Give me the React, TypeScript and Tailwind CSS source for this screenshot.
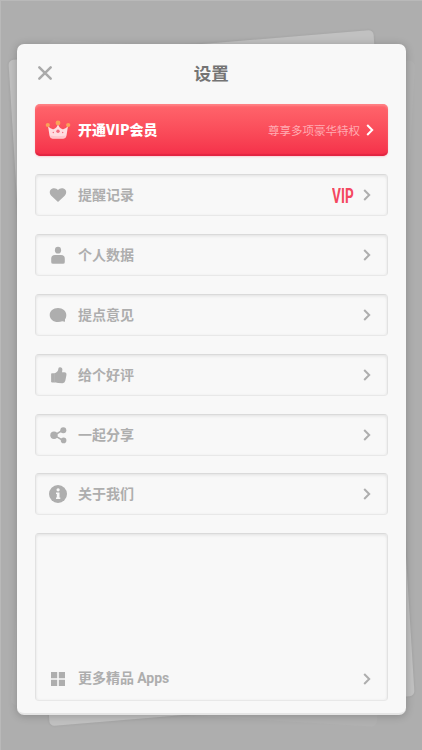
import type { ReactNode } from "react";

const Chevron = ({ className }: { className: string }) => (
  <svg viewBox="0 0 8 12" className={`h-3 w-2 ${className}`} fill="none">
    <path d="M1.2 1L6.2 6L1.2 11" stroke="currentColor" strokeWidth="2" />
  </svg>
);

const Crown = () => (
  <svg viewBox="0 0 26 20" className="h-5 w-[26px]">
    <path
      d="M3 6Q6 10 9 9Q12 8 13 4Q14 8 17 9Q20 10 23 6L21.5 15.5Q21 18.5 18 18.5H8Q5 18.5 4.5 15.5Z"
      fill="#ffdce0"
    />
    <path d="M5 15.5Q13 17 21 15.5L20.5 17Q20 18.5 18 18.5H8Q6 18.5 5.5 17Z" fill="#ffc5cb" />
    <g fill="#f9a258">
      <circle cx="2.8" cy="5" r="2.1" />
      <circle cx="13" cy="2.9" r="2.4" />
      <circle cx="23.2" cy="5" r="2.1" />
    </g>
    <g fill="#f26b7d">
      <circle cx="13" cy="11.3" r="1.7" />
      <circle cx="8.3" cy="12.5" r="0.7" />
      <circle cx="17.7" cy="12.5" r="0.7" />
    </g>
  </svg>
);

const icons: Record<string, ReactNode> = {
  heart: (
    <path d="M10 17L3.3 10.8C1 8.4 1.4 4.8 4 3.8C6.4 2.8 8.8 3.6 10 5.2C11.2 3.6 13.6 2.8 16 3.8C18.6 4.8 19 8.4 16.7 10.8Z" />
  ),
  user: (
    <>
      <ellipse cx="10" cy="5.2" rx="3.1" ry="3.4" />
      <path d="M3.2 13.7Q3.2 10 7 10H13Q16.8 10 16.8 13.7V16.9Q16.8 18.8 14.9 18.8H5.1Q3.2 18.8 3.2 16.9Z" />
    </>
  ),
  chat: (
    <path d="M10 3C14.8 3 18.3 6 18.3 9.9C18.3 11.7 17.9 13 17 14.2L17 16.8L14.2 16.3C13 16.8 11.6 17.1 10 17.1C5.2 17.1 1.7 14 1.7 10C1.7 6 5.2 3 10 3Z" />
  ),
  thumb: (
    <>
      <path d="M3.1 9Q3.1 8.2 3.9 8.2H6.8V17.4H4.3Q3.1 17.4 3.1 16.2Z" />
      <path d="M6.4 8.4Q10.2 7.3 10.4 3.6Q10.6 2.2 12.1 2.2Q14.4 2.2 14.4 4.8L14 7.2H16.3Q18.9 7.4 18.4 10.2L17.3 15.8Q16.8 18 14.5 18.2Q10 18.2 6.4 17.3Z" />
    </>
  ),
  share: (
    <>
      <path d="M15 5L6.3 10.3L15 15.5" fill="none" stroke="currentColor" strokeWidth="1.5" />
      <circle cx="6" cy="10.2" r="3.7" />
      <circle cx="15.3" cy="5.2" r="3" />
      <circle cx="15.6" cy="15.4" r="2.8" />
    </>
  ),
  info: (
    <>
      <circle cx="10" cy="10" r="9" />
      <circle cx="10.1" cy="5.8" r="1.6" fill="#f8f8f8" />
      <path d="M8 8.5H11.5V13.4H12.3V15H8V13.4H8.8V10H8Z" fill="#f8f8f8" />
    </>
  ),
  grid: (
    <path d="M3 3H9.2V9.2H3ZM10.8 3H17V9.2H10.8ZM3 10.8H9.2V17H3ZM10.8 10.8H17V17H10.8Z" />
  ),
};

type RowProps = { icon: string; label: ReactNode; vip?: boolean };

const Row = ({ icon, label, vip }: RowProps) => (
  <div className="flex h-10 w-full items-center pr-4 pl-[12.5px] text-[#aeaeae]">
    <svg viewBox="0 0 20 20" className="h-5 w-5" fill="currentColor">
      {icons[icon]}
    </svg>
    <span className="mb-0.5 ml-2.5 text-[14px] leading-5 font-bold">{label}</span>
    <span className="ml-auto flex items-center">
      {vip && (
        <span className="mt-0.5 mr-[9px] flex w-[22px] justify-center font-['Roboto',sans-serif] text-[20px] leading-5 font-bold text-[#f44860]">
          <span className="scale-x-[0.68]">VIP</span>
        </span>
      )}
      <Chevron className="text-[#aeaeae]" />
    </span>
  </div>
);

const box =
  "rounded-[4px] border border-t-[#dadada] border-x-[#e2e2e2] border-b-[#e8e8e8] bg-[#f8f8f8] shadow-[inset_0_2px_3px_rgba(0,0,0,0.05),inset_0_0_3px_rgba(0,0,0,0.05)]";

const rows: { icon: string; label: string; vip?: boolean }[] = [
  { icon: "heart", label: "提醒记录", vip: true },
  { icon: "user", label: "个人数据" },
  { icon: "chat", label: "提点意见" },
  { icon: "thumb", label: "给个好评" },
  { icon: "share", label: "一起分享" },
  { icon: "info", label: "关于我们" },
];

export default function App() {
  return (
    <div className="relative h-[750px] w-[422px] overflow-hidden border-t border-l border-[#b9b9b9] bg-[#aeaeae] font-['Noto_Sans_CJK_SC',sans-serif]">
      {/* tilted sheets behind the main card */}
      <div className="absolute top-[49px] left-[29px] h-[666px] w-[366px] [transform:matrix(1,0.06,-0.058,1,0,0)] rounded-md bg-[#b1b1b1]" />
      <div className="absolute top-[43.5px] left-[28px] h-[666px] w-[365px] [transform:matrix(1,-0.083,0.062,1,0,0)] rounded-[5px] bg-[#c1c1c1] shadow-[0_0_3px_rgba(0,0,0,0.08)]" />

      <main className="relative mt-[43px] ml-4 flex h-[671px] w-[389px] flex-col rounded-[7px] border-b-2 border-[#e5e5e5] bg-[#f8f8f8] pr-[18px] pl-[17.5px] shadow-[0_1px_8px_rgba(0,0,0,0.22)]">
        <header className="grid h-[60px] shrink-0 grid-cols-3 items-center pb-0.5">
          <svg viewBox="0 0 16 16" className="ml-[2.5px] h-4 w-4" fill="none">
            <path d="M2.3 2.3L13.7 13.7M13.7 2.3L2.3 13.7" stroke="#aaaaaa" strokeWidth="2.5" strokeLinecap="round" />
          </svg>
          <h1 className="text-center text-[17.5px] leading-6 font-bold text-[#747474]">设置</h1>
        </header>

        <div className="flex h-[52px] shrink-0 items-center rounded-[5px] bg-linear-to-b from-[#ff656c] to-[#f52e49] pr-3.5 pl-[10.5px] shadow-[inset_0_2px_2px_rgba(255,160,160,0.5),inset_0_-2px_1px_rgba(215,30,60,0.6),0_1px_2px_rgba(245,46,73,0.2)]">
          <Crown />
          <span className="mb-0.5 ml-[7px] text-[14px] leading-5 font-black text-white">开通VIP会员</span>
          <span className="ml-auto text-[11.5px] leading-5 text-[#ffacb3]">尊享多项豪华特权</span>
          <Chevron className="ml-1.5 text-white" />
        </div>

        <section className="mt-[18px] flex flex-col gap-[17.9px]">
          {rows.map((row) => (
            <div key={row.label} className={`flex h-[42px] items-center ${box}`}>
              <Row {...row} />
            </div>
          ))}
          <div className={`flex h-[167.5px] items-end pb-px ${box}`}>
            <Row
              icon="grid"
              label={
                <>
                  更多精品 <span className="font-['Roboto',sans-serif]">Apps</span>
                </>
              }
            />
          </div>
        </section>
      </main>
    </div>
  );
}
